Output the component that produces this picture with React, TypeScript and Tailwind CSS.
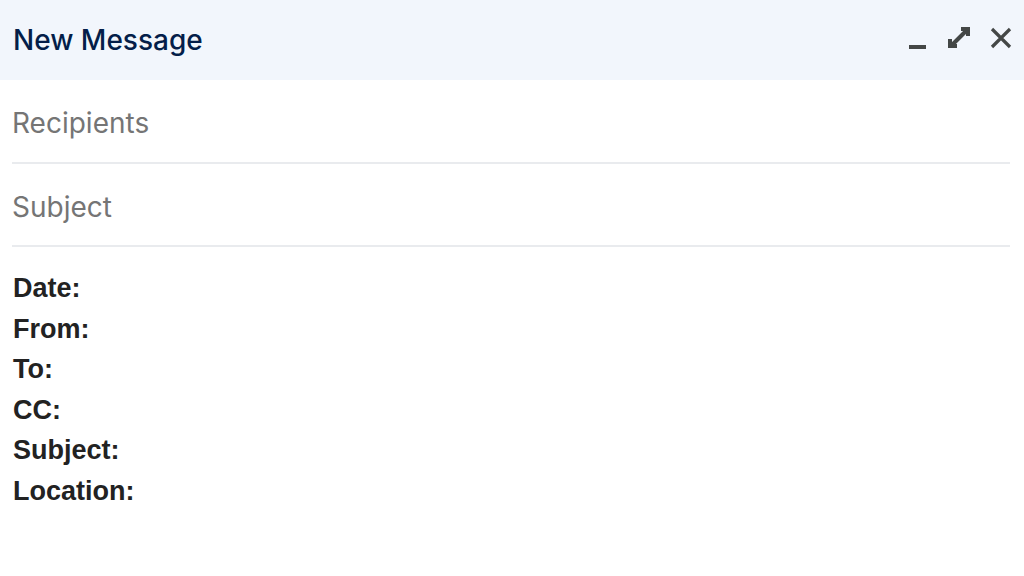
import { useState } from 'react'

const labels = ['Date:', 'From:', 'To:', 'CC:', 'Subject:', 'Location:']

function MinimizeIcon() {
  return (
    <svg width="32" height="32" viewBox="0 0 32 32" fill="currentColor">
      <rect x="8" y="21" width="17" height="4" />
    </svg>
  )
}

function ExpandIcon() {
  return (
    <svg width="32" height="32" viewBox="0 0 32 32" fill="none" stroke="currentColor" strokeWidth="4">
      <path d="M18 5H25V12" strokeLinejoin="miter" />
      <path d="M24.5 5.5L7.5 22.5" />
      <path d="M7 15V22H14" strokeLinejoin="miter" />
    </svg>
  )
}

function CloseIcon() {
  return (
    <svg width="32" height="32" viewBox="0 0 32 32" fill="none" stroke="currentColor" strokeWidth="3.2">
      <path d="M7 5L25 23M25 5L7 23" />
    </svg>
  )
}

export default function App() {
  const [recipients, setRecipients] = useState('')
  const [subject, setSubject] = useState('')

  return (
    <div className="h-[576px] w-[1024px] overflow-hidden bg-white">
      <header className="flex h-[80px] items-center justify-between bg-[#f2f6fc] pl-[13px] pr-[7px]">
        <h1 className="font-['Inter',sans-serif] text-[28px] font-medium text-[#041e49]">New Message</h1>
        <div className="flex items-center gap-[10px] text-[#444746]">
          <button aria-label="Minimize" className="flex h-8 w-8 items-center justify-center">
            <MinimizeIcon />
          </button>
          <button aria-label="Full screen" className="flex h-8 w-8 items-center justify-center">
            <ExpandIcon />
          </button>
          <button aria-label="Close" className="flex h-8 w-8 items-center justify-center">
            <CloseIcon />
          </button>
        </div>
      </header>

      <div className="pl-3 pr-[14px]">
        <div className="flex h-[84px] items-center border-b-2 border-[#e9ebee] pt-[4px]">
          <input
            value={recipients}
            onChange={(e) => setRecipients(e.target.value)}
            placeholder="Recipients"
            className="w-full bg-transparent font-['Inter',sans-serif] text-[28px] text-[#1f1f1f] outline-none placeholder:text-[#757575]"
          />
        </div>
        <div className="flex h-[83px] items-center border-b-2 border-[#e9ebee] pt-[4px]">
          <input
            value={subject}
            onChange={(e) => setSubject(e.target.value)}
            placeholder="Subject"
            className="w-full bg-transparent font-['Inter',sans-serif] text-[28px] text-[#1f1f1f] outline-none placeholder:text-[#757575]"
          />
        </div>
        <div className="pl-px pt-[21px] font-['Liberation_Sans',Arial,sans-serif] text-[27px] leading-[40.5px] font-bold text-[#222222]">
          {labels.map((l) => (
            <div key={l}>{l}</div>
          ))}
        </div>
      </div>
    </div>
  )
}
